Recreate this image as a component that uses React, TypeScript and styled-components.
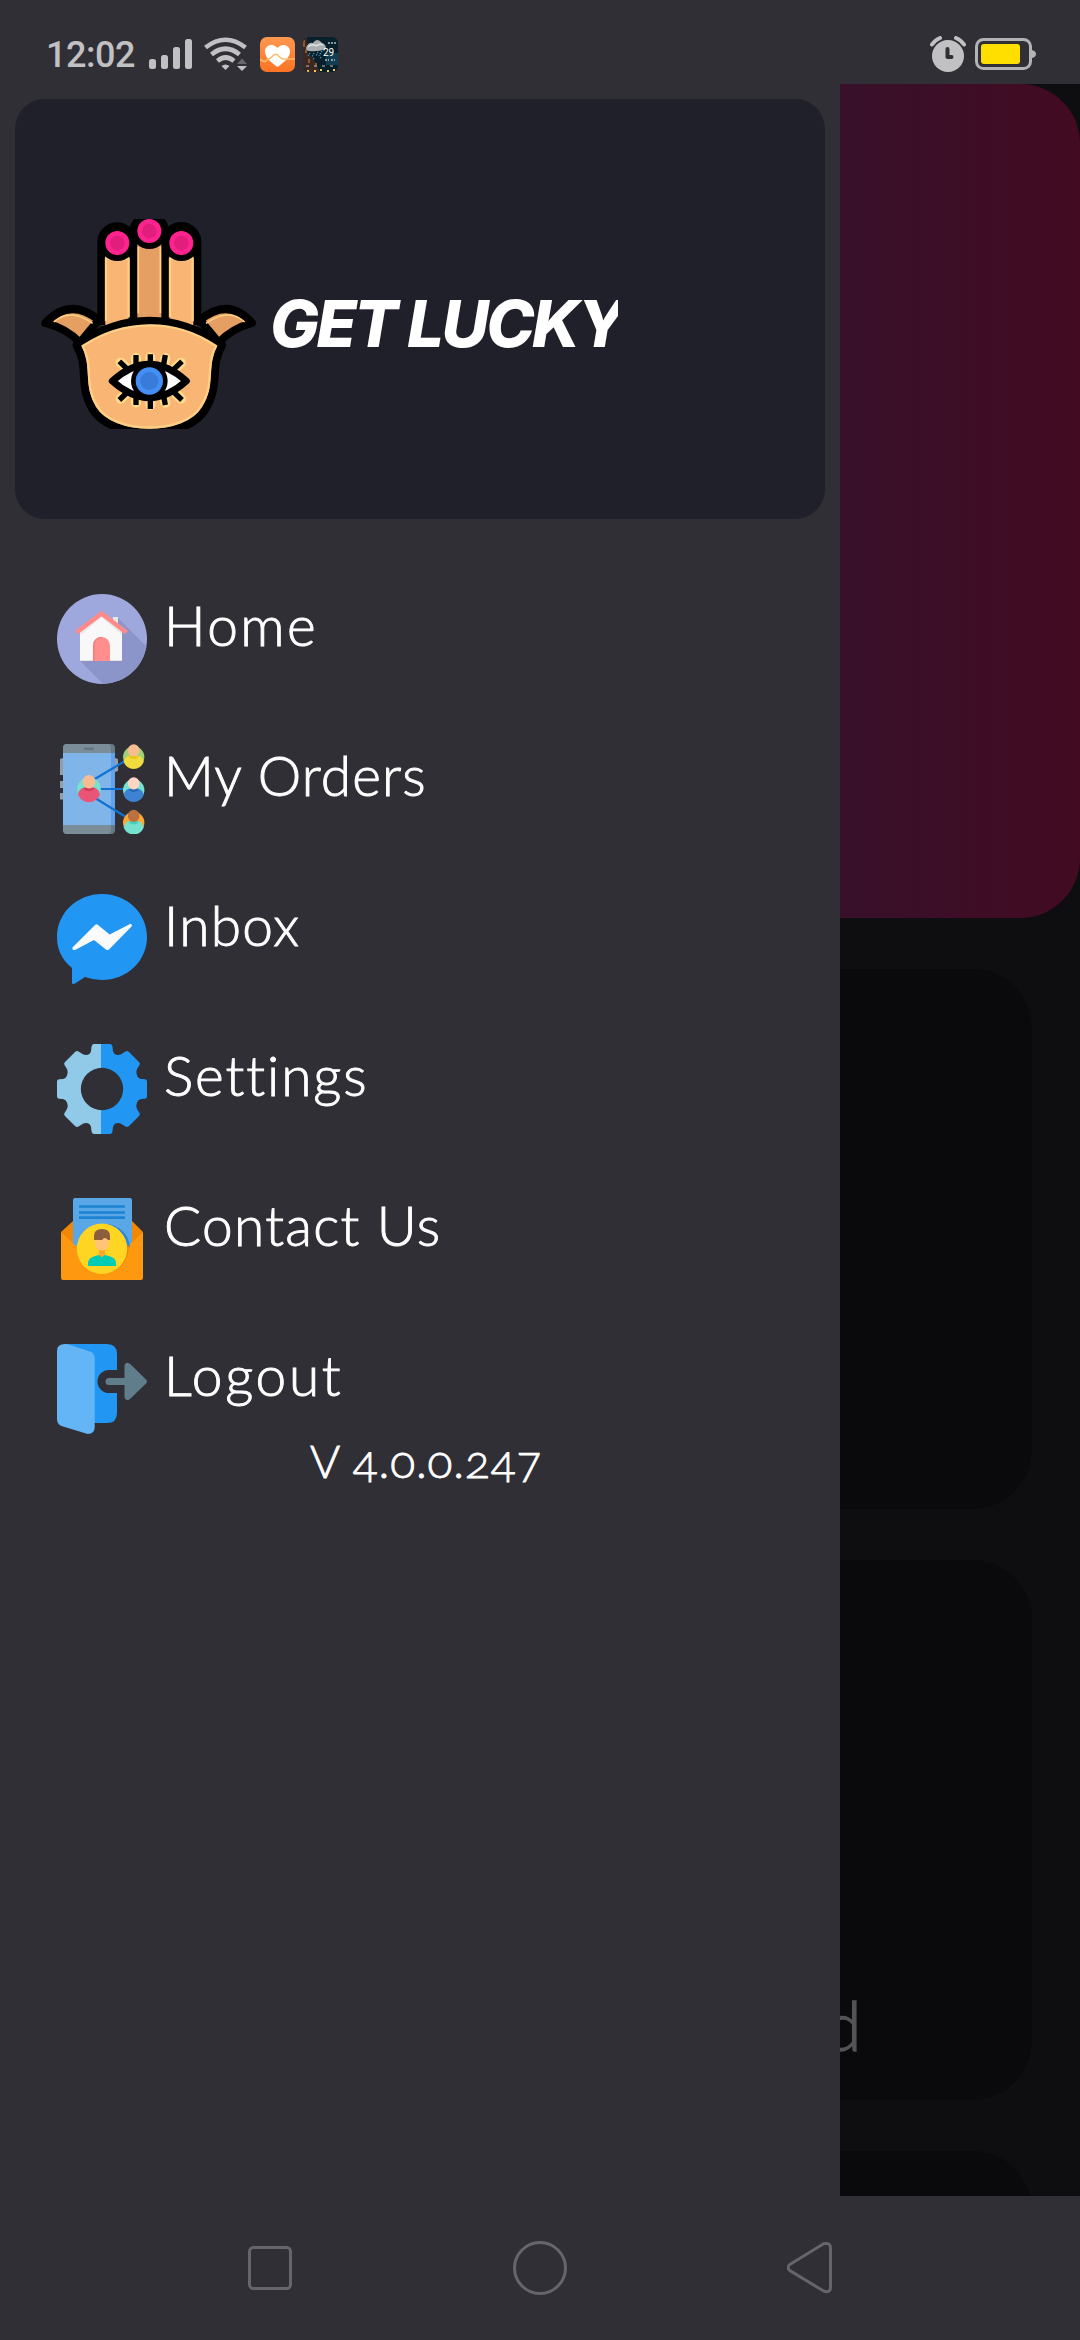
import React from "react";
import styled, { createGlobalStyle } from "styled-components";

const GlobalStyle = createGlobalStyle`
  * { box-sizing: border-box; }
  body { margin: 0; background: #302f35; }
  svg { display: block; flex: none; }
`;

const Screen = styled.div`
  width: 1080px;
  height: 2340px;
  display: flex;
  flex-direction: column;
  overflow: hidden;
  background: #302f35;
  font-family: Lato, "Open Sans", sans-serif;
  color: #fff;
`;

const StatusBar = styled.header`
  height: 84px;
  flex: none;
  display: flex;
  justify-content: space-between;
  padding: 35px 44px 0 46px;
`;

const StatusGroup = styled.div<{ $gap: number }>`
  display: flex;
  height: 38px;
  align-items: center;
  gap: ${(p) => p.$gap}px;
`;

const Clock = styled.span`
  width: 90px;
  margin: 2px 5px 0 0;
  font: 500 36px/38px Roboto, sans-serif;
  letter-spacing: -0.5px;
  color: #c1c1c3;
  white-space: nowrap;
`;

const Body = styled.div`
  height: 2112px;
  flex: none;
  display: flex;
`;

const Drawer = styled.aside`
  width: 840px;
  flex: none;
  padding: 15px;
  background: #302f35;
`;

const Brand = styled.div`
  height: 420px;
  display: flex;
  align-items: center;
  padding: 30px 25px 0 25px;
  border-radius: 30px;
  background: #20202a;
`;

const BrandName = styled.h1`
  width: 348px;
  margin: 0 0 0 14px;
  overflow: hidden;
  font-family: Inter, Lato, sans-serif;
  font-size: 65px;
  line-height: 84px;
  font-weight: 800;
  font-style: italic;
  letter-spacing: -2.5px;
  white-space: nowrap;
`;

const Menu = styled.nav`
  display: flex;
  flex-direction: column;
  gap: 60px;
  padding: 75px 0 0 42px;
`;

const MenuItem = styled.a`
  height: 90px;
  display: flex;
  gap: 17px;
`;

const Label = styled.span<{ $spacing: number }>`
  font-size: 55px;
  line-height: 62px;
  font-weight: 300;
  letter-spacing: ${(p) => p.$spacing}px;
  -webkit-text-stroke: 0.9px #fff;
  white-space: nowrap;
`;

const Version = styled.p`
  margin: 0;
  padding-left: 295px;
  font-size: 46px;
  line-height: 54px;
  font-weight: 300;
  letter-spacing: 0.9px;
  -webkit-text-stroke: 0.8px #fff;
  font-variant-numeric: oldstyle-nums;
  white-space: nowrap;
`;

const Content = styled.main`
  flex: 1;
  min-width: 0;
  overflow: hidden;
  background: #0e0e10;
`;

const Banner = styled.section`
  height: 834px;
  border-radius: 0 60px 60px 0;
  background: linear-gradient(90deg, #38102a, #420b22);
`;

const Tile = styled.section`
  height: 540px;
  margin: 51px 48px 0 0;
  display: flex;
  align-items: flex-end;
  overflow: hidden;
  border-radius: 0 60px 60px 0;
  background: #0a0a0c;
`;

const TileLabel = styled.span`
  margin: 0 0 35px -16px;
  font-size: 68px;
  line-height: 80px;
  font-weight: 300;
  -webkit-text-stroke: 1.4px #545455;
  color: #545455;
`;

const NavBar = styled.footer`
  flex: 1;
  display: flex;
  align-items: center;
  justify-content: space-between;
  padding: 0 247px;
`;

const SignalIcon = () => (
  <svg width="47" height="32" viewBox="0 0 47 32" fill="#c1c1c3">
    <rect x="0" y="21" width="7" height="10" rx="2.5" />
    <rect x="12" y="17" width="7" height="14" rx="2.5" />
    <rect x="24" y="9" width="7" height="22" rx="2.5" />
    <rect x="36" y="1" width="7" height="30" rx="2.5" />
  </svg>
);

const WifiIcon = () => (
  <svg width="48" height="34" viewBox="0 0 48 34">
    <g fill="none" stroke="#c1c1c3" strokeWidth="4.6">
      <path d="M1.5 10.5Q21.500 -5 41.500 10.500" />
      <path d="M7.500 17.500Q21.500 6 35.500 17.500" />
      <path d="M13.500 24Q21.500 17 30 24" />
    </g>
    <path d="M17.500 29q4-3 8 0l-4 4z" fill="#c1c1c3" />
    <path d="M33 27l5-5.500 5 5.500z" fill="#68676c" />
    <path d="M33 29h10l-5 5z" fill="#c1c1c3" />
  </svg>
);

const HealthIcon = () => (
  <svg width="35" height="35" viewBox="0 0 35 35">
    <defs>
      <linearGradient id="health" x2="0" y2="1">
        <stop stopColor="#ff9850" />
        <stop offset="1" stopColor="#fc7424" />
      </linearGradient>
    </defs>
    <rect width="35" height="35" rx="7" fill="url(#health)" />
    <path d="M17.500 30C12 26 5 21 5 14.500 5 8 13 5.500 17.500 11 22 5.500 30 8 30 14.500 30 21 23 26 17.500 30z" fill="#fff" />
    <path d="M0 22q3 3.500 6 2 2-3 4-2.500 5-5 7-4 4 4 6 4.500H35" fill="none" stroke="#ffbd6c" strokeWidth="1.600" />
  </svg>
);

const WeatherIcon = () => (
  <svg width="35" height="35" viewBox="0 0 35 35">
    <defs>
      <clipPath id="weatherFrame"><rect width="35" height="35" rx="6" /></clipPath>
    </defs>
    <g clipPath="url(#weatherFrame)">
      <path d="M0 0h35v35H0z" fill="#08202b" />
      <path d="M0 0h4v14l9 12 4 9H0z" fill="#3a2822" />
      <path d="M23 16h12v12H23z" fill="#113e50" />
      <path d="M1 3v7M3 13v3M6 22v4M13 26v3" stroke="#b06429" strokeWidth="1.500" />
      <path d="M3 11q2-6 7-5 4-6 9 0 4 1 4 6-8 3-17 2-3 0-3-3z" fill="#aab0b1" />
      <path d="M5 10q4-4 8-1 4-3 7-1" fill="none" stroke="#e2e3df" strokeWidth="1.500" />
      <path d="M7 16l-2 3M11 16l-2 4M15 15l-2 4M19 14l-3 5M11 21l-1 2M18 20l-1 2" stroke="#3e9cc4" strokeWidth="1.200" strokeDasharray="1.500 1" />
      <path d="M25 6h8M22 23h4m2 0h4" stroke="#a9bcc1" strokeWidth="1.500" strokeDasharray="2 1" />
      <text x="20" y="19" fontFamily="Roboto" fontSize="10" fill="#fff">29</text>
      <path d="M3 29h3m5 0h3m5 0h3m5 0h3" stroke="#c4bbaa" strokeWidth="1" />
      <path d="M4 34h2m5 0h2m4-1h2m5 1h2m4-1h2" stroke="#f4ca50" strokeWidth="2" />
    </g>
  </svg>
);

const AlarmIcon = () => (
  <svg width="36" height="36" viewBox="0 0 36 36">
    <path d="M2 8.500Q5 4 10 2M34 8.500Q31 4 26 2" stroke="#c1c1c3" strokeWidth="4" strokeLinecap="round" fill="none" />
    <circle cx="18" cy="20" r="16" fill="#c1c1c3" />
    <path d="M17.500 13v8h4" fill="none" stroke="#302f35" strokeWidth="4" strokeLinecap="round" strokeLinejoin="round" />
  </svg>
);

const BatteryIcon = () => (
  <svg width="61" height="32" viewBox="0 0 61 32">
    <path d="M57 12q4 1 4 4t-4 4z" fill="#b3b3b5" />
    <rect x="1.500" y="1.500" width="54" height="29" rx="7" fill="none" stroke="#b3b3b5" strokeWidth="3" />
    <rect x="6" y="6" width="39" height="20" rx="3" fill="#ffdf00" />
  </svg>
);

const HandLogo = () => (
  <svg width="216" height="210" viewBox="60 57 648 630">
    <g stroke="#000" strokeWidth="24" strokeLinejoin="round">
      <path d="M76 369Q150 290 236 360L180 428Q142 386 76 369zM696 369Q626 290 540 360L596 428Q634 386 696 369z" fill="#e69f62" />
      <path d="M244 376V128a47 47 0 0 1 94-4V376M436 376V124a47 47 0 0 1 96 4V376" fill="#f8b574" />
      <path d="M340 370V96a47 47 0 0 1 96 0V370z" fill="#e69f62" />
      <path d="M170 436Q274 362 388 362T606 436C568 500 602 555 556 628 500 722 276 722 218 628 174 555 208 500 170 436z" fill="#f8b574" />
    </g>
    <g fill="none" stroke="#ffcf86" strokeWidth="7">
      <path d="M258 364V176h68V352M450 352V176h68V364M188 438Q280 377 388 376T588 438C555 500 586 555 543 618 495 704 281 704 232 618 190 555 222 500 188 438z" />
      <path d="M355 340V140M421 340V140M102 366Q150 322 218 370M674 366Q626 322 558 370" strokeWidth="5" />
    </g>
    <g fill="#e11e7b" stroke="#000" strokeWidth="20">
      <circle cx="292" cy="129" r="44" />
      <circle cx="484" cy="129" r="44" />
      <circle cx="388" cy="93" r="44" />
    </g>
    <g fill="none" stroke="#ff238f" strokeWidth="14">
      <circle cx="292" cy="129" r="29" />
      <circle cx="484" cy="129" r="29" />
      <circle cx="388" cy="93" r="29" />
    </g>
    <g stroke="#ffdc8c" strokeWidth="30" strokeLinecap="round">
      <path d="M302 488l24 22M348 474v26M391 472v26M436 474l-5 26M483 488l-22 22M302 596l24-22M348 608v-26M391 616v-26M436 608l-5-26M483 596l-22-22" />
    </g>
    <path d="M277 543Q388 443 499 543Q388 643 277 543z" fill="#fff" stroke="#000" strokeWidth="21" strokeLinejoin="round" />
    <path d="M298 484l28 27M348 465v32M391 463v32M436 465l-6 32M486 484l-28 27M298 600l28-27M348 615v-32M391 627v-36M436 615l-6-32M486 600l-28-27" stroke="#000" strokeWidth="16" />
    <circle cx="388" cy="543" r="55" fill="#000" />
    <circle cx="388" cy="543" r="41" fill="#438ff3" />
    <circle cx="388" cy="543" r="27" fill="#397bd8" />
  </svg>
);

const HomeIcon = () => (
  <svg width="90" height="90" viewBox="0 0 90 90">
    <defs><clipPath id="homeDisc"><circle cx="45" cy="45" r="45" /></clipPath></defs>
    <g clipPath="url(#homeDisc)">
      <path d="M0 0h90v90H0z" fill="#9fa8dc" />
      <path d="M61 24l34 34v40H54L23 67z" fill="#8b95c9" />
    </g>
    <path d="M56 23h5v14h-5z" fill="#e8e8e8" />
    <path d="M23 38l22-20 20 20v29H23z" fill="#f8f8f8" />
    <path d="M23 66h42v1H23z" fill="#e4e4e4" />
    <path d="M24 39.500l20.500-17.500L65 39.500" fill="none" stroke="#e7e7e7" strokeWidth="2" />
    <path d="M19.500 38.500L44.500 19.500 69.500 38.500" fill="none" stroke="#ff8a8a" strokeWidth="4.500" />
    <path d="M36 67V51.500a8.500 8.500 0 0 1 17 0V67z" fill="#ff8e8c" />
    <path d="M36.700 67V51.500a8 8 0 0 1 8-8" fill="none" stroke="#f57c7c" strokeWidth="1.500" />
  </svg>
);

interface PersonProps {
  x: number;
  y: number;
  back: string;
  skin: string;
  shirt: string;
  collar: string;
  scale?: number;
}

const Person = ({ x, y, back, skin, shirt, collar, scale = 1 }: PersonProps) => (
  <g transform={`translate(${x} ${y}) scale(${scale})`}>
    <circle r="10.700" fill={back} />
    <path d="M-10 5q1-7 10-7t10 7q-3 7-10 7t-10-7z" fill={shirt} />
    <path d="M-5-1h10q-1 3-5 3t-5-3z" fill={collar} />
    <ellipse cy="-6.600" rx="5.800" ry="6.200" fill={skin} />
  </g>
);

const OrdersIcon = () => (
  <svg width="90" height="90" viewBox="0 0 90 90">
    <path d="M3 15l3-1v17H3zM3 37h3v7H3zM3 49h3v6.500H3zM58 14l3 1v12l-3 1z" fill="#929faa" />
    <rect x="6" width="52" height="90" rx="4" fill="#677987" />
    <path d="M10 0h40q4 0 4 4v82q0 4-4 4H10q-4 0-4-4V4q0-4 4-4z" fill="#7b8d99" />
    <path d="M6 9h48v72H6z" fill="#80b5e9" />
    <path d="M54 9h4v72h-4z" fill="#62a1ec" />
    <rect x="27" y="3.500" width="10" height="2.500" rx="1" fill="#657683" />
    <path d="M37 35.500L68 17M43 45h25M38 54L69 73" stroke="#1072d1" strokeWidth="2.200" />
    <Person x={76.700} y={13} back="#a1d177" skin="#f7bd91" shirt="#f1dc40" collar="#e8c516" />
    <Person x={76.700} y={46} back="#75e1ce" skin="#ffd6c2" shirt="#3d83d2" collar="#256bbb" />
    <Person x={76.700} y={78.500} back="#fea838" skin="#bd713f" shirt="#75e1ce" collar="#4acdb7" />
    <Person x={32} y={45} back="#75e1ce" skin="#f7bd91" shirt="#ea5576" collar="#d63b5d" scale={1.100} />
  </svg>
);

const InboxIcon = () => (
  <svg width="90" height="90" viewBox="0 0 90 90">
    <path d="M45 0C70 0 90 19 90 43S70 86 45 86q-9 0-17-3l-10 6.500q-3 1.500-3-1V74Q0 62 0 43C0 19 20 0 45 0z" fill="#2196f3" />
    <path d="M15.500 53.500L38 31q1.500-1.500 3 0l11.700 9.500L73 30q2-.5 2 2L52 55.500q-1.500 1-3 0L37 46 18 56q-3 .5-2.500-2.500z" fill="#fafafa" />
  </svg>
);

const GEAR_HALF =
  "M45 0H53Q55 0 55.500 3L56 7Q57 11 61 11Q64 11 66 9L69 7.200Q70.500 6.500 72 8L82 18Q83.500 19.500 82.500 21L80 25Q78.500 28 80 31.500Q81 34.500 84 35L88 35.300Q90 35.500 90 37.500V52.500Q90 54.500 88 54.700L84 55Q81 55.500 80 58.500Q78.500 62 80 65L82.500 69Q83.500 70.500 82 72L72 82Q70.500 83.500 69 82.800L66 81Q64 79 61 79Q57 79 56 83L55.500 87Q55 90 53 90H45V66.200A21.200 21.200 0 0 0 45 23.800Z";

const SettingsIcon = () => (
  <svg width="90" height="90" viewBox="0 0 90 90">
    <path d={GEAR_HALF} transform="matrix(-1 0 0 1 90 0)" fill="#90cae8" />
    <path d={GEAR_HALF} fill="#2196f3" />
    <path d="M44 0h1v24h-1zM44 66h1v24h-1z" fill="#2196f3" />
  </svg>
);

const ContactIcon = () => (
  <svg width="90" height="90" viewBox="0 0 90 90">
    <path d="M4 38l12-11h59l11 11-15 20H19z" fill="#f08705" />
    <path d="M18 4h55q2 0 2 2v48H16V6q0-2 2-2z" fill="#59a7e7" />
    <path d="M4 38l15 14h52l15-14v46q0 2-2 2H6q-2 0-2-2z" fill="#ff9811" />
    <path d="M47 30A25 25 0 0 1 73 53L67 52z" fill="#2c87d6" />
    <path d="M71.500 51A26 26 0 0 1 52 79L68 52z" fill="#f08300" />
    <path d="M22 12.500h46M22 18.500h46M22 23.700h46" stroke="#1e82d2" strokeWidth="2.700" />
    <circle cx="45" cy="54.700" r="25.200" fill="#ffd524" />
    <path d="M42 53h6v8l-3 5-3-5z" fill="#ffa62e" />
    <path d="M31 72v-3q0-5 7-7l4-1 3 2 3-2 4 1q7 2 7 7v3z" fill="#00cbb4" />
    <path d="M42 60h6l-3 3.500z" fill="#ffa62e" />
    <path d="M38 44q7-3 14 0v5q0 7-7 7.500-7-.5-7-7.500z" fill="#ffc477" />
    <path d="M37 46v-4q0-7 8-7t8 7v4h-2q-1-2-4-2l-2 2z" fill="#8c5e3b" />
  </svg>
);

const LogoutIcon = () => (
  <svg width="90" height="90" viewBox="0 0 90 90">
    <path d="M8 0h42q10 0 10 10v16h-8a11.500 11.500 0 0 0 0 23h8v20q0 10-10 10H30z" fill="#2196f3" />
    <path d="M8 0q3 0 5 1l20 6.500q4.700 1.500 4.700 6.500v69q0 7-7 7L6 82.500Q0 81 0 75V7q0-7 8-7z" fill="#64b5f6" />
    <path d="M52 34h15.500V22q0-3 3-3.200 1.500 0 3 1.500L89 35.500q2 2 0 4L73 55q-1.500 1.500-3 1-2.500-.5-2.500-3V41H52a3.500 3.500 0 0 1 0-7z" fill="#607d8b" />
  </svg>
);

const RecentsIcon = () => (
  <svg width="46" height="46" viewBox="0 0 46 46" fill="none" stroke="#66656a" strokeWidth="3">
    <rect x="2.500" y="2.500" width="41" height="41" rx="4" />
  </svg>
);

const HomeKeyIcon = () => (
  <svg width="56" height="56" viewBox="0 0 56 56" fill="none" stroke="#66656a" strokeWidth="3">
    <circle cx="28" cy="28" r="25.500" />
  </svg>
);

const BackIcon = () => (
  <svg width="46" height="54" viewBox="0 0 46 54" fill="none" stroke="#66656a" strokeWidth="3">
    <path d="M2.800 23.500L36.500 2.800Q43.500 1 43.500 7V46Q43.500 52.500 36.500 50L2.800 29.500Q-.5 26.500 2.800 23.500z" />
  </svg>
);

const items = [
  { label: "Home", spacing: 2.5, Icon: HomeIcon },
  { label: "My Orders", spacing: 1.1, Icon: OrdersIcon },
  { label: "Inbox", spacing: 1.3, Icon: InboxIcon },
  { label: "Settings", spacing: 1.9, Icon: SettingsIcon },
  { label: "Contact Us", spacing: 1.3, Icon: ContactIcon },
  { label: "Logout", spacing: 2.7, Icon: LogoutIcon },
];

export default function App() {
  return (
    <Screen>
      <GlobalStyle />
      <StatusBar>
        <StatusGroup $gap={8}>
          <Clock>12:02</Clock>
          <SignalIcon />
          <WifiIcon />
          <HealthIcon />
          <WeatherIcon />
        </StatusGroup>
        <StatusGroup $gap={9}>
          <AlarmIcon />
          <BatteryIcon />
        </StatusGroup>
      </StatusBar>
      <Body>
        <Drawer>
          <Brand>
            <HandLogo />
            <BrandName>GET LUCKY</BrandName>
          </Brand>
          <Menu>
            {items.map(({ label, spacing, Icon }) => (
              <MenuItem key={label}>
                <Icon />
                <Label $spacing={spacing}>{label}</Label>
              </MenuItem>
            ))}
          </Menu>
          <Version>V 4.0.0.247</Version>
        </Drawer>
        <Content>
          <Banner />
          <Tile />
          <Tile>
            <TileLabel>d</TileLabel>
          </Tile>
          <Tile />
        </Content>
      </Body>
      <NavBar>
        <RecentsIcon />
        <HomeKeyIcon />
        <BackIcon />
      </NavBar>
    </Screen>
  );
}
